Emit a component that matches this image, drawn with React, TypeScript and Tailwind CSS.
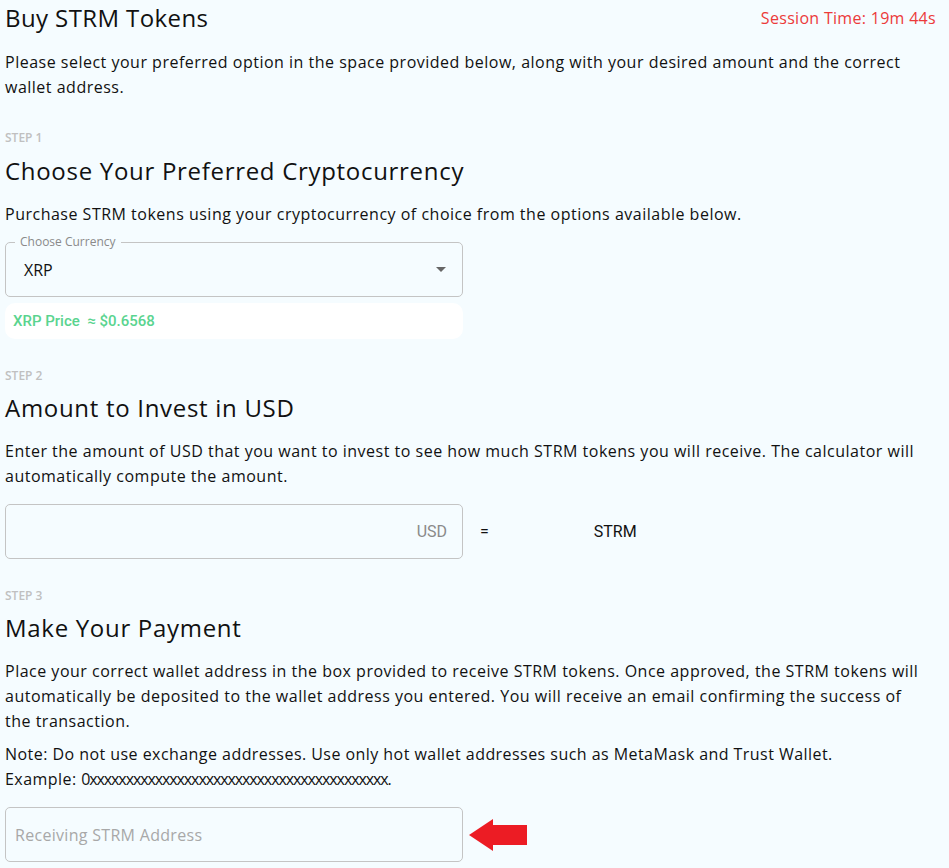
export default function App() {
  const body = "font-['Open_Sans',sans-serif]";
  return (
    <main className={`min-h-screen bg-[#f5fcff] text-[#111] ${body}`}>
      <div className="pl-[5px] pr-[13px]">
        <div className="flex h-9 items-center justify-between">
          <h1 className="text-[24px] font-normal leading-9 tracking-[0.4px]">Buy STRM Tokens</h1>
          <span className="text-[16px] tracking-[0.3px] text-[#ec3a3a]">Session Time: 19m 44s</span>
        </div>
        <p className="mt-[14px] max-w-[920px] text-[16px] leading-[25px] tracking-[0.5px]">
          Please select your preferred option in the space provided below, along with your desired amount and the correct
          wallet address.
        </p>

        {/* step 1 */}
        <div className="mt-[30px] text-[12px] font-semibold leading-4 text-[#c0c0c0]">STEP 1</div>
        <h2 className="mt-[7px] text-[24px] leading-9 tracking-[0.7px]">Choose Your Preferred Cryptocurrency</h2>
        <p className="mt-[13px] max-w-[920px] text-[16px] leading-[25px] tracking-[0.5px]">
          Purchase STRM tokens using your cryptocurrency of choice from the options available below.
        </p>
        <div className="relative mt-[15px] flex h-[55px] w-[458px] items-center rounded-[5px] border border-[#c4c4c4] pl-[18px] pr-4">
          <span className="absolute -top-[9px] left-[9px] bg-[#f5fcff] px-[5px] text-[12px] leading-4 text-[#8a8a8a]">
            Choose Currency
          </span>
          <span className="flex-1 text-[16px]">XRP</span>
          <svg width="10" height="5" viewBox="0 0 10 5" className="fill-[#666]">
            <path d="M0 0h10L5 5z" />
          </svg>
        </div>
        <div className="mt-[6px] flex h-9 w-[458px] items-center rounded-[10px] bg-white pl-2 font-['Roboto',sans-serif] text-[15px] font-medium text-[#5ad48f]">
          XRP Price&nbsp;&nbsp;≈ $0.6568
        </div>

        {/* step 2 */}
        <div className="mt-[29px] text-[12px] font-semibold leading-4 text-[#c0c0c0]">STEP 2</div>
        <h2 className="mt-[6px] text-[24px] leading-9 tracking-[0.7px]">Amount to Invest in USD</h2>
        <p className="mt-[13px] max-w-[920px] text-[16px] leading-[25px] tracking-[0.5px]">
          Enter the amount of USD that you want to invest to see how much STRM tokens you will receive. The calculator will
          automatically compute the amount.
        </p>
        <div className="mt-[15px] flex items-center">
          <div className="flex h-[55px] w-[458px] items-center justify-end rounded-[5px] border border-[#c4c4c4] pr-[15px] font-['Roboto',sans-serif] text-[16px] text-[#8a8a8a]">
            USD
          </div>
          <span className="ml-[17px] font-['Roboto',sans-serif] text-[16px]">=</span>
          <span className="ml-[105px] font-['Roboto',sans-serif] text-[16px]">STRM</span>
        </div>

        {/* step 3 */}
        <div className="mt-[29px] text-[12px] font-semibold leading-4 text-[#c0c0c0]">STEP 3</div>
        <h2 className="mt-[6px] text-[24px] leading-9 tracking-[0.7px]">Make Your Payment</h2>
        <p className="mt-[13px] max-w-[920px] text-[16px] leading-[25px] tracking-[0.5px]">
          Place your correct wallet address in the box provided to receive STRM tokens. Once approved, the STRM tokens will
          automatically be deposited to the wallet address you entered. You will receive an email confirming the success of
          the transaction.
        </p>
        <p className="mt-2 text-[16px] leading-[25px] tracking-[0.45px]">
          Note: Do not use exchange addresses. Use only hot wallet addresses such as MetaMask and Trust Wallet.
          <br />
          Example: <span className="tracking-[-1.1px]">0xxxxxxxxxxxxxxxxxxxxxxxxxxxxxxxxxxxxxxxxx.</span>
        </p>
        <div className="mt-[15px] flex items-center pb-1">
          <div className="flex h-[55px] w-[458px] items-center rounded-[5px] border border-[#c4c4c4] pl-[9px] text-[16px] tracking-[0.3px] text-[#a8a8a8]">
            Receiving STRM Address
          </div>
          <svg width="58" height="32" viewBox="0 0 58 32" className="ml-[6px] fill-[#ec1c24]">
            <path d="M0 16L24 0v6h34v20H24v6z" />
          </svg>
        </div>
      </div>
    </main>
  );
}
